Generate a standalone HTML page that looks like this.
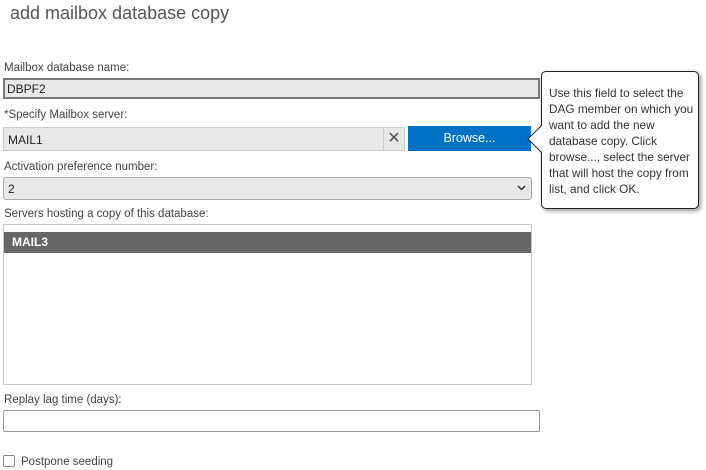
<!DOCTYPE html>
<html><head><style>
body{margin:0;width:706px;height:470px;background:#fff;font-family:"Liberation Sans",sans-serif;color:#444;position:relative;overflow:hidden}
div,span{position:absolute;box-sizing:border-box}
.lbl{font-size:11.5px;color:#444;left:4px}
.t{font-size:12px;color:#222}
</style></head><body>
<div style="left:10px;top:3px;font-size:18px;color:#555">add mailbox database copy</div>

<div class="lbl" style="top:62px">Mailbox database name:</div>
<div style="left:3px;top:78px;width:537px;height:21px;background:#e8e8e8;border:2px solid #777;"></div>
<div class="t" style="left:7px;top:82px">DBPF2</div>

<div class="lbl" style="top:109px">*Specify Mailbox server:</div>
<div style="left:3px;top:127px;width:381px;height:24px;background:#e8e8e8;border:1px solid #ccc"></div>
<div class="t" style="left:8px;top:133px">MAIL1</div>
<div style="left:383px;top:127px;width:22px;height:24px;background:#e8e8e8;border:1px solid #ccc;font-size:16px;color:#555;text-align:center;line-height:21px">✕</div>
<div style="left:408px;top:126px;width:123px;height:25px;background:#0072c6;color:#fff;font-size:12.5px;text-align:center;line-height:25px">Browse...</div>

<div class="lbl" style="top:161px">Activation preference number:</div>
<div style="left:3px;top:177px;width:529px;height:23px;background:#e8e8e8;border:1px solid #aaa;border-radius:3px"></div>
<div class="t" style="left:8px;top:182px">2</div>
<svg style="position:absolute;left:517px;top:185px" width="9" height="6"><path d="M1 1L4.5 4.5L8 1" stroke="#333" stroke-width="1.5" fill="none"/></svg>

<div class="lbl" style="top:208px">Servers hosting a copy of this database:</div>
<div style="left:3px;top:224px;width:529px;height:161px;border:1px solid #c8c8c8"></div>
<div style="left:4px;top:232px;width:527px;height:21px;background:#666;color:#fff;font-weight:bold;font-size:12px;line-height:21px;padding-left:8px">MAIL3</div>

<div class="lbl" style="top:394px">Replay lag time (days):</div>
<div style="left:3px;top:410px;width:537px;height:22px;border:1px solid #999;border-radius:2px"></div>

<div style="left:3px;top:455px;width:12px;height:12px;border:1px solid #888;border-radius:2px"></div>
<div class="lbl" style="left:21px;top:456px">Postpone seeding</div>

<div style="left:541px;top:71px;width:158px;height:138px;background:#fff;border:1px solid #222;border-radius:5px;box-shadow:2px 2px 4px rgba(0,0,0,.4);padding:13px 0 0 7px;font-size:11.8px;line-height:16px;color:#333">Use this field to select the DAG member on which you want to add the new database copy. Click browse..., select the server that will host the copy from list, and click OK.</div>
<svg style="position:absolute;left:527px;top:125px" width="16" height="30"><path d="M15 0L1 14L15 28" stroke="#222" fill="#fff"/><rect x="15" y="0" width="2" height="30" fill="#fff"/></svg>
</body></html>
